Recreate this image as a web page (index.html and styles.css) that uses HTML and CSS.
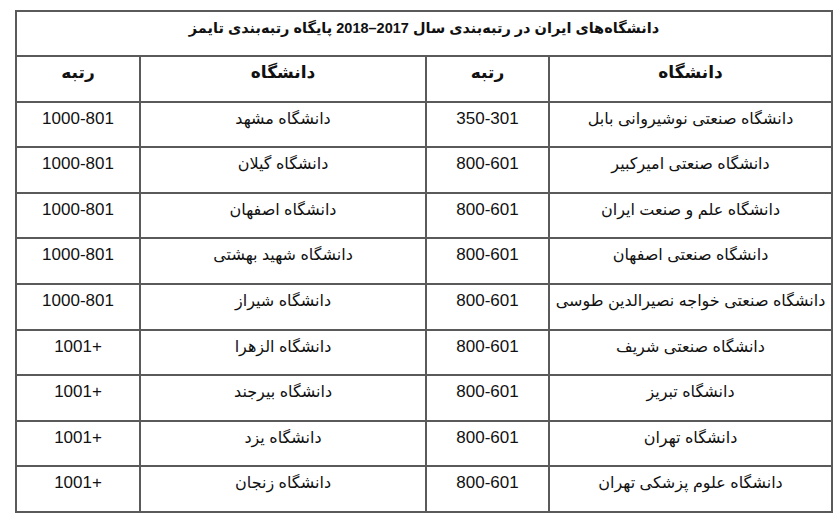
FILE: index.html
```html
<!DOCTYPE html>
<html lang="fa">
<head>
<meta charset="utf-8">
<link rel="stylesheet" href="styles.css">
</head>
<body>
<div class="page">
<table class="rank" dir="rtl">
  <colgroup>
    <col class="c-uni1"><col class="c-rank1"><col class="c-uni2"><col class="c-rank2">
  </colgroup>
  <tr class="title-row"><td colspan="4" class="title">دانشگاه‌های ایران در رتبه‌بندی سال 2017–2018 پایگاه رتبه‌بندی تایمز</td></tr>
  <tr class="head-row"><th>دانشگاه</th><th>رتبه</th><th>دانشگاه</th><th>رتبه</th></tr>
  <tr><td>دانشگاه صنعتی نوشیروانی بابل</td><td class="num">301‐350</td><td>دانشگاه مشهد</td><td class="num">801‐1000</td></tr>
  <tr><td>دانشگاه صنعتی امیرکبیر</td><td class="num">601‐800</td><td>دانشگاه گیلان</td><td class="num">801‐1000</td></tr>
  <tr><td>دانشگاه علم و صنعت ایران</td><td class="num">601‐800</td><td>دانشگاه اصفهان</td><td class="num">801‐1000</td></tr>
  <tr><td>دانشگاه صنعتی اصفهان</td><td class="num">601‐800</td><td>دانشگاه شهید بهشتی</td><td class="num">801‐1000</td></tr>
  <tr><td>دانشگاه صنعتی خواجه نصیرالدین طوسی</td><td class="num">601‐800</td><td>دانشگاه شیراز</td><td class="num">801‐1000</td></tr>
  <tr><td>دانشگاه صنعتی شریف</td><td class="num">601‐800</td><td>دانشگاه الزهرا</td><td class="num">+1001</td></tr>
  <tr><td>دانشگاه تبریز</td><td class="num">601‐800</td><td>دانشگاه بیرجند</td><td class="num">+1001</td></tr>
  <tr><td>دانشگاه تهران</td><td class="num">601‐800</td><td>دانشگاه یزد</td><td class="num">+1001</td></tr>
  <tr><td>دانشگاه علوم پزشکی تهران</td><td class="num">601‐800</td><td>دانشگاه زنجان</td><td class="num">+1001</td></tr>
</table>
</div>
</body>
</html>
```

FILE: styles.css
```css
html, body {
  margin: 0;
  padding: 0;
  background: #ffffff;
}

.page {
  padding: 10px 0 0 15px;
}

.rank {
  border-collapse: collapse;
  width: 816px;
  table-layout: fixed;
  font-family: "Liberation Sans", "DejaVu Sans", sans-serif;
  color: #111111;
  font-size: 16px;
}

.c-uni1 { width: 283px; }
.c-rank1 { width: 123px; }
.c-uni2 { width: 286px; }
.c-rank2 { width: 124px; }

.rank td, .rank th {
  border: 2px solid #5a5a5a;
  text-align: center;
  vertical-align: top;
  padding: 5px 4px 0;
  height: 38.6px;
  line-height: 22px;
  font-weight: normal;
}

.rank th {
  font-weight: bold;
  font-size: 17px;
}

.rank .title-row td {
  height: 38px;
  font-weight: bold;
  font-size: 14.5px;
  padding-top: 5px;
}

.rank .num {
  font-size: 17px;
}
```
